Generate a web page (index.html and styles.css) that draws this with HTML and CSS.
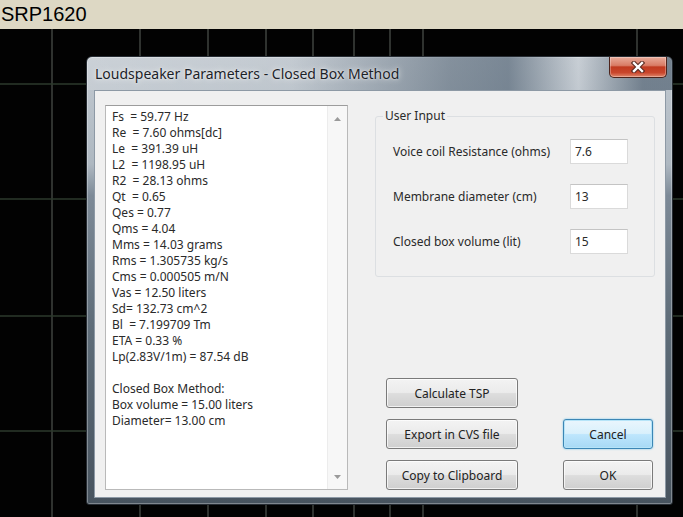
FILE: index.html
```html
<!DOCTYPE html>
<html lang="en">
<head>
  <meta charset="UTF-8" />
  <meta name="viewport" content="width=device-width, initial-scale=1.0"/>
  <title>SRP1620</title>
  <link rel="stylesheet" href="styles.css">
</head>
<body>
  <div class="topbar">SRP1620</div>

  <div class="plot">
    <!-- response plot grid, log scale on x -->
    <svg class="grid" width="683" height="488" viewBox="0 0 683 488">
      <g class="grid-v">
        <line x1="52" y1="0" x2="52" y2="488"/>
        <line x1="140" y1="0" x2="140" y2="488"/>
        <line x1="208" y1="0" x2="208" y2="488"/>
        <line x1="266" y1="0" x2="266" y2="488"/>
        <line x1="313" y1="0" x2="313" y2="488"/>
        <line x1="354" y1="0" x2="354" y2="488"/>
        <line x1="390" y1="0" x2="390" y2="488"/>
        <line x1="423" y1="0" x2="423" y2="488"/>
        <line x1="637" y1="0" x2="637" y2="488"/>
      </g>
      <g class="grid-h">
        <line x1="0" y1="55" x2="683" y2="55"/>
        <line x1="0" y1="170" x2="683" y2="170"/>
        <line x1="0" y1="287" x2="683" y2="287"/>
        <line x1="0" y1="402" x2="683" y2="402"/>
      </g>
    </svg>

    <div class="dialog">
      <div class="titlebar">
        <span class="title">Loudspeaker Parameters - Closed Box Method</span>
        <button class="close" title="Close">
          <svg width="14" height="12" viewBox="0 0 14 12">
            <path d="M3 2 L11 10 M11 2 L3 10" class="x-outline"/>
            <path d="M3 2 L11 10 M11 2 L3 10" class="x-fill"/>
          </svg>
        </button>
      </div>

      <div class="client">
        <div class="results">
          <div class="results-text">
            <div>Fs&nbsp; = 59.77 Hz</div>
            <div>Re&nbsp; = 7.60 ohms[dc]</div>
            <div>Le&nbsp; = 391.39 uH</div>
            <div>L2&nbsp; = 1198.95 uH</div>
            <div>R2&nbsp; = 28.13 ohms</div>
            <div>Qt&nbsp; = 0.65</div>
            <div>Qes = 0.77</div>
            <div>Qms = 4.04</div>
            <div>Mms = 14.03 grams</div>
            <div>Rms = 1.305735 kg/s</div>
            <div>Cms = 0.000505 m/N</div>
            <div>Vas = 12.50 liters</div>
            <div>Sd= 132.73 cm^2</div>
            <div>Bl&nbsp; = 7.199709 Tm</div>
            <div>ETA = 0.33 %</div>
            <div>Lp(2.83V/1m) = 87.54 dB</div>
            <div>&nbsp;</div>
            <div>Closed Box Method:</div>
            <div>Box volume = 15.00 liters</div>
            <div>Diameter= 13.00 cm</div>
          </div>
          <div class="scrollbar">
            <svg width="7" height="4" viewBox="0 0 7 4"><path d="M0 4 L3.5 0 L7 4 Z"/></svg>
            <svg width="7" height="4" viewBox="0 0 7 4"><path d="M0 0 L3.5 4 L7 0 Z"/></svg>
          </div>
        </div>

        <div class="side">
          <fieldset class="group">
            <legend>User Input</legend>
            <div class="field">
              <label for="re">Voice coil Resistance (ohms)</label>
              <input id="re" type="text" value="7.6">
            </div>
            <div class="field">
              <label for="diam">Membrane diameter (cm)</label>
              <input id="diam" type="text" value="13">
            </div>
            <div class="field">
              <label for="vol">Closed box volume (lit)</label>
              <input id="vol" type="text" value="15">
            </div>
          </fieldset>

          <div class="actions">
            <button class="btn">Calculate TSP</button>
            <span></span>
            <button class="btn">Export in CVS file</button>
            <button class="btn btn-default">Cancel</button>
            <button class="btn">Copy to Clipboard</button>
            <button class="btn btn-small">OK</button>
          </div>
        </div>
      </div>
    </div>
  </div>
</body>
</html>
```

FILE: styles.css
```css
body {
  margin: 0;
  width: 683px;
  height: 517px;
  overflow: hidden;
  background: #000;
  font-family: "Noto Sans", "Open Sans", sans-serif;
}

.topbar {
  height: 29px;
  background: #ddd8c4;
  color: #000;
  font-family: "Liberation Sans", Arial, sans-serif;
  font-size: 20px;
  line-height: 29px;
  padding-left: 1px;
  box-sizing: border-box;
}

.plot {
  position: relative;
  height: 488px;
  background: #020202;
}
.grid {
  display: block;
}
.grid-v line {
  stroke: #3b3f3b;
  stroke-width: 1.6;
}
.grid-h line {
  stroke: #2c3a2c;
  stroke-width: 1.6;
}

/* window frame */
.dialog {
  position: absolute;
  left: 86px;
  top: 27px;
  width: 587px;
  height: 449px;
  box-sizing: border-box;
  border: 1px solid #262c33;
  border-radius: 6px 6px 3px 3px;
  padding: 0 6px 6px 7px;
  display: flex;
  flex-direction: column;
  background: linear-gradient(to bottom, #c2c9d0 0%, #aeb8c1 24%, #7d8a97 31%, #5f6d79 60%, #48545f 100%);
  box-shadow: inset 0 0 0 1px rgba(255, 255, 255, 0.3);
}

.titlebar {
  height: 33px;
  display: flex;
  align-items: flex-start;
  margin: 0 -6px 0 -7px;
  padding: 0 5px 0 8px;
  border-radius: 5px 5px 0 0;
  background: linear-gradient(to right,
    rgba(255, 255, 255, 0.15) 0%,
    rgba(255, 255, 255, 0.03) 35%,
    rgba(40, 60, 80, 0.4) 62%,
    rgba(50, 70, 90, 0.5) 72%,
    rgba(255, 255, 255, 0.1) 84%,
    rgba(40, 60, 80, 0.5) 95%);
}
.title {
  font-size: 14px;
  line-height: 33px;
  color: #1c2228;
  text-shadow: 0 0 6px rgba(255, 255, 255, 0.9), 0 0 2px rgba(255, 255, 255, 0.7);
}
.close {
  margin-left: auto;
  width: 58px;
  height: 21px;
  padding: 0;
  border: 1px solid #4d241c;
  border-top: none;
  border-radius: 0 0 5px 5px;
  background: linear-gradient(to bottom, #e9ab9a 0%, #d97c66 42%, #c03a20 50%, #c9462c 78%, #e0876c 100%);
  box-shadow: inset 0 0 0 1px rgba(255, 255, 255, 0.3);
  display: flex;
  align-items: center;
  justify-content: center;
}
.x-outline {
  stroke: #5b2b22;
  stroke-width: 4.5;
  stroke-linecap: square;
}
.x-fill {
  stroke: #fff;
  stroke-width: 2.4;
  stroke-linecap: square;
}

.client {
  flex: 1;
  display: flex;
  background: #f0f0f0;
  border: 1px solid #8d99a5;
  padding: 14px 0 0 10px;
  font-size: 12px;
  color: #2a2a2a;
}

/* read-only results box */
.results {
  width: 243px;
  height: 385px;
  box-sizing: border-box;
  display: flex;
  background: #fff;
  border: 1px solid #b9b9b9;
  border-top-color: #9c9c9c;
}
.results-text {
  flex: 1;
  padding: 3px 0 0 6px;
  line-height: 16px;
  white-space: nowrap;
}
.scrollbar {
  width: 19px;
  border-left: 1px solid #ececec;
  background: #f7f7f7;
  display: flex;
  flex-direction: column;
  justify-content: space-between;
  align-items: center;
  padding: 11px 0 10px;
}
.scrollbar path {
  fill: #9a9a9a;
}

.side {
  width: 280px;
  margin-left: 27px;
  height: 385px;
  padding-top: 3px;
  box-sizing: border-box;
  display: flex;
  flex-direction: column;
  justify-content: space-between;
}

.group {
  margin: 0;
  padding: 15px 0 22px 17px;
  border: 1px solid #dcdfe2;
  border-radius: 3px;
  min-width: 0;
  display: flex;
  flex-direction: column;
  gap: 20px;
}
.group legend {
  padding: 0 2px;
  margin-left: -10px;
  line-height: 16px;
}
.field {
  display: flex;
  align-items: center;
  height: 25px;
}
.field label {
  width: 177px;
  flex: none;
}
.field input {
  width: 58px;
  height: 25px;
  box-sizing: border-box;
  border: 1px solid #dadada;
  border-top-color: #c4c4c4;
  background: #fff;
  padding: 0 0 0 4px;
  font: inherit;
  color: #2a2a2a;
}

.actions {
  display: grid;
  grid-template-columns: 132px 90px;
  grid-auto-rows: 30px;
  column-gap: 45px;
  row-gap: 11px;
  padding-left: 11px;
}
.btn {
  font: inherit;
  font-size: 12px;
  color: #222;
  border: 1px solid #7a7a7a;
  border-radius: 3px;
  background: linear-gradient(to bottom, #f3f3f3 0%, #ebebeb 48%, #dddddd 52%, #cfcfcf 100%);
  box-shadow: inset 0 0 0 1px rgba(255, 255, 255, 0.7);
  cursor: pointer;
}
.btn-default {
  border-color: #3c86b5;
  background: linear-gradient(to bottom, #eaf6fd 0%, #d9f0fc 48%, #bee6fd 52%, #a7d9f5 100%);
  box-shadow: inset 0 0 0 1px #b6e4f8, 0 0 2px #69c3ec;
}
```
